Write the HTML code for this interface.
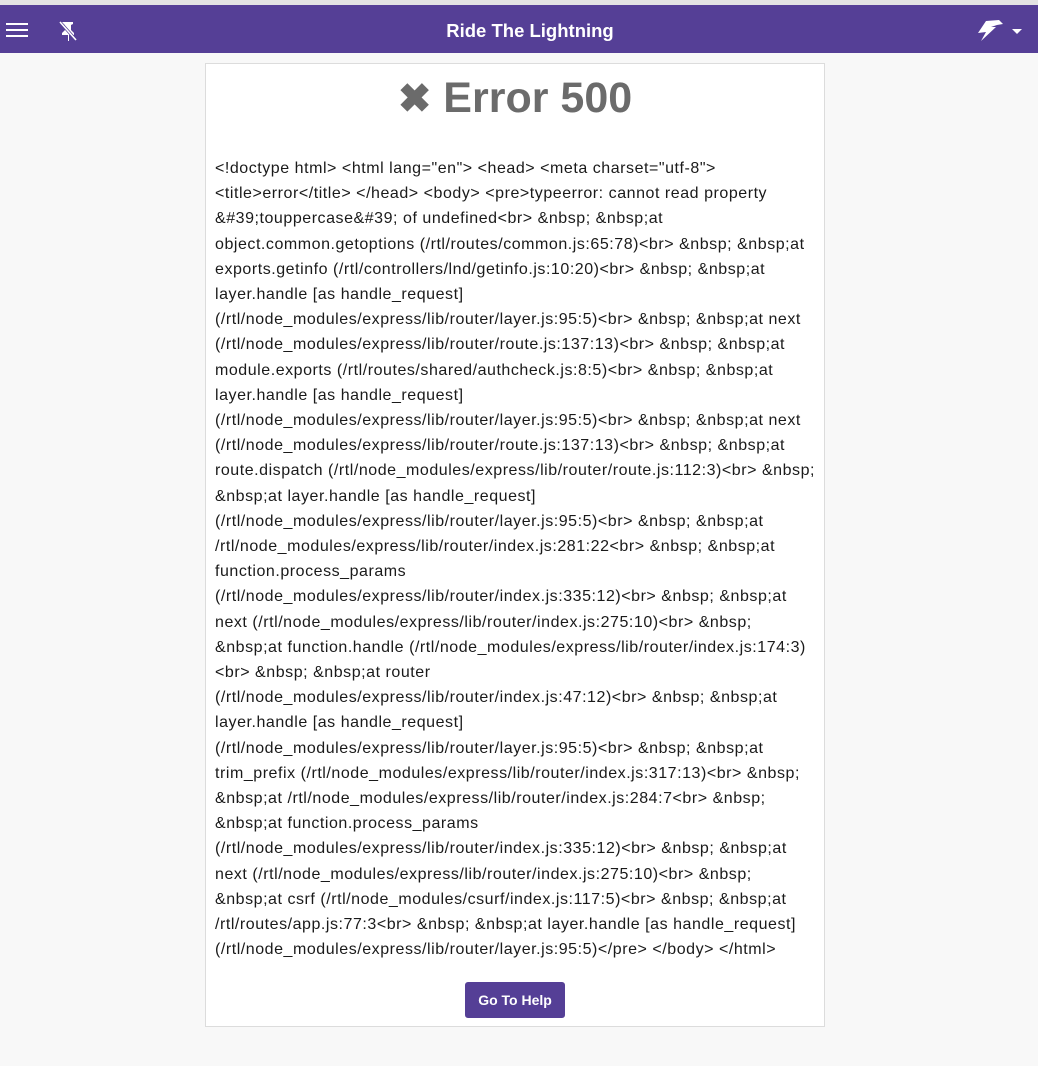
<!DOCTYPE html>
<html><head><meta charset="utf-8">
<style>
html,body{margin:0;padding:0;}
body{width:1038px;height:1073px;background:#fff;font-family:"Liberation Sans",Arial,sans-serif;position:relative;overflow:hidden;}
.topline{position:absolute;left:0;top:0;width:1038px;height:5px;background:#e3e3e3;}
.bg{position:absolute;left:0;top:53px;width:1038px;height:1013px;background:#f8f8f8;}
.hdr{position:absolute;left:0;top:5px;width:1038px;height:48px;background:#553f96;}
.title{position:absolute;left:0;width:1060px;top:1px;line-height:50px;text-align:center;color:#fff;font-weight:bold;font-size:18.5px;}
.card{position:absolute;left:205px;top:63px;width:618px;height:962px;background:#fff;border:1px solid #dcdcdc;}
h1{position:absolute;left:0;width:100%;top:4px;margin:0;text-align:center;font-size:43px;color:#6b6b6b;font-weight:bold;line-height:60px;}
.txt{position:absolute;left:9px;top:92px;font-size:16px;letter-spacing:0.54px;line-height:25.2px;color:#1a1a1a;white-space:nowrap;}
.btn{position:absolute;left:259px;top:918px;width:100px;height:36px;background:#553f96;border-radius:3px;color:#fff;font-weight:bold;font-size:14px;text-align:center;line-height:36px;}
</style></head><body>
<div class="topline"></div>
<div class="bg"></div>
<div class="hdr">
<svg style="position:absolute;left:6px;top:17px" width="22" height="16" viewBox="0 0 22 16"><rect x="0" y="1" width="22" height="2" fill="#fff"/><rect x="0" y="7" width="22" height="2" fill="#fff"/><rect x="0" y="13" width="22" height="2" fill="#fff"/></svg>
<svg style="position:absolute;left:58px;top:15px" width="20" height="22" viewBox="0 0 20 22"><path d="M4 2h11v2l-2 1v5l3 3v2h-5v6h-1v-6H4v-2l3-3V5L5 4z" fill="#fff"/><path d="M2 2l16 18" stroke="#553f96" stroke-width="3"/><path d="M2 2l16 18" stroke="#fff" stroke-width="1.6"/></svg>
<div class="title">Ride The Lightning</div>
<svg style="position:absolute;left:977px;top:14px" width="26" height="24" viewBox="0 0 26 24"><path d="M9 2 L22 1 L26 5 L20 6 L14 8 L19 8 L4 22 L9 13 L1 14 Z" fill="#fff"/></svg>
<svg style="position:absolute;left:1012px;top:24px" width="10" height="6" viewBox="0 0 10 6"><path d="M0 0h10L5 5z" fill="#fff"/></svg>
</div>
<div class="card">
<h1><span style="font-size:40px">✖</span> Error 500</h1>
<div class="txt">
&lt;!doctype html&gt; &lt;html lang="en"&gt; &lt;head&gt; &lt;meta charset="utf-8"&gt;<br>
&lt;title&gt;error&lt;/title&gt; &lt;/head&gt; &lt;body&gt; &lt;pre&gt;typeerror: cannot read property<br>
&amp;#39;touppercase&amp;#39; of undefined&lt;br&gt; &amp;nbsp; &amp;nbsp;at<br>
object.common.getoptions (/rtl/routes/common.js:65:78)&lt;br&gt; &amp;nbsp; &amp;nbsp;at<br>
exports.getinfo (/rtl/controllers/lnd/getinfo.js:10:20)&lt;br&gt; &amp;nbsp; &amp;nbsp;at<br>
layer.handle [as handle_request]<br>
(/rtl/node_modules/express/lib/router/layer.js:95:5)&lt;br&gt; &amp;nbsp; &amp;nbsp;at next<br>
(/rtl/node_modules/express/lib/router/route.js:137:13)&lt;br&gt; &amp;nbsp; &amp;nbsp;at<br>
module.exports (/rtl/routes/shared/authcheck.js:8:5)&lt;br&gt; &amp;nbsp; &amp;nbsp;at<br>
layer.handle [as handle_request]<br>
(/rtl/node_modules/express/lib/router/layer.js:95:5)&lt;br&gt; &amp;nbsp; &amp;nbsp;at next<br>
(/rtl/node_modules/express/lib/router/route.js:137:13)&lt;br&gt; &amp;nbsp; &amp;nbsp;at<br>
route.dispatch (/rtl/node_modules/express/lib/router/route.js:112:3)&lt;br&gt; &amp;nbsp;<br>
&amp;nbsp;at layer.handle [as handle_request]<br>
(/rtl/node_modules/express/lib/router/layer.js:95:5)&lt;br&gt; &amp;nbsp; &amp;nbsp;at<br>
/rtl/node_modules/express/lib/router/index.js:281:22&lt;br&gt; &amp;nbsp; &amp;nbsp;at<br>
function.process_params<br>
(/rtl/node_modules/express/lib/router/index.js:335:12)&lt;br&gt; &amp;nbsp; &amp;nbsp;at<br>
next (/rtl/node_modules/express/lib/router/index.js:275:10)&lt;br&gt; &amp;nbsp;<br>
&amp;nbsp;at function.handle (/rtl/node_modules/express/lib/router/index.js:174:3)<br>
&lt;br&gt; &amp;nbsp; &amp;nbsp;at router<br>
(/rtl/node_modules/express/lib/router/index.js:47:12)&lt;br&gt; &amp;nbsp; &amp;nbsp;at<br>
layer.handle [as handle_request]<br>
(/rtl/node_modules/express/lib/router/layer.js:95:5)&lt;br&gt; &amp;nbsp; &amp;nbsp;at<br>
trim_prefix (/rtl/node_modules/express/lib/router/index.js:317:13)&lt;br&gt; &amp;nbsp;<br>
&amp;nbsp;at /rtl/node_modules/express/lib/router/index.js:284:7&lt;br&gt; &amp;nbsp;<br>
&amp;nbsp;at function.process_params<br>
(/rtl/node_modules/express/lib/router/index.js:335:12)&lt;br&gt; &amp;nbsp; &amp;nbsp;at<br>
next (/rtl/node_modules/express/lib/router/index.js:275:10)&lt;br&gt; &amp;nbsp;<br>
&amp;nbsp;at csrf (/rtl/node_modules/csurf/index.js:117:5)&lt;br&gt; &amp;nbsp; &amp;nbsp;at<br>
/rtl/routes/app.js:77:3&lt;br&gt; &amp;nbsp; &amp;nbsp;at layer.handle [as handle_request]<br>
(/rtl/node_modules/express/lib/router/layer.js:95:5)&lt;/pre&gt; &lt;/body&gt; &lt;/html&gt;
</div>
<div class="btn">Go To Help</div>
</div>
</body></html>
